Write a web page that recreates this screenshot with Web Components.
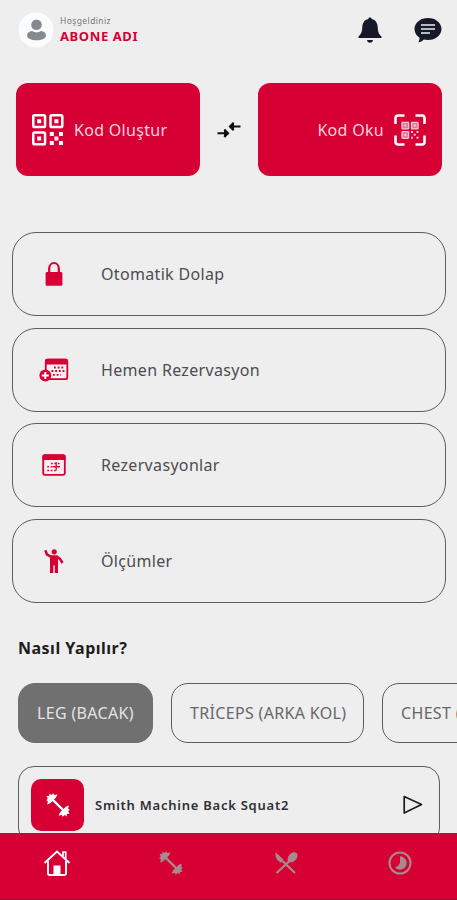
<!DOCTYPE html>
<html lang="tr">
<head>
<meta charset="UTF-8">
<meta name="viewport" content="width=device-width, initial-scale=1.0">
<title>Abone</title>
<style>
  :root {
    --primary-color: #d70035;
    --background: #eeeeee;
    --text-color: #4c4c51;
    --dark-color: #17182a;
    --border-color: #5c5c5e;
  }

  * {
    box-sizing: border-box;
  }

  body {
    margin: 0;
    background: var(--background);
    color: var(--text-color);
    font-family: "Noto Sans", "Open Sans", sans-serif;
  }
</style>
</head>
<body>
<gym-app></gym-app>

<script>
const ICONS = {
  user: `<svg viewBox="0 0 36 36" width="36" height="36">
      <circle cx="18" cy="18" r="17.5" fill="#fbfcfd"/>
      <g fill="#858a90"><circle cx="18.5" cy="12.8" r="5.3"/>
      <path d="M9 23.5c0-2.4 2-4 5-4.4 2.8 1.7 6.2 1.7 9 0 3 .4 5 2 5 4.4 0 2.8-4.2 4.8-9.5 4.8S9 26.3 9 23.5z"/></g>
    </svg>`,
  bell: `<svg viewBox="0 0 24 28" width="24" height="28" fill="currentColor">
      <path d="M12 1.5c1 0 1.6.6 1.8 1.6 3.7.9 5.7 4 5.9 8 .2 4.5.8 6.9 3.8 9.4v1.6H.5v-1.6c3-2.5 3.600-4.9 3.8-9.4.2-4 2.2-7.100 5.900-8C10.400 2.100 11 1.500 12 1.500zM9 24h6c-.2 1.800-1.400 2.800-3 2.800S9.200 25.800 9 24z"/>
    </svg>`,
  chat: `<svg viewBox="0 0 28 28" width="28" height="28">
      <path fill="currentColor" d="M14 2c7.5 0 13.5 4.8 13.5 11S21.5 24 14 24c-1.500 0-2.900-.2-4.200-.5-1.300 1.600-3.200 2.600-5.600 2.700 1-1.200 1.400-2.800 1.300-4.400C2.400 19.700.5 16.600.5 13 .5 6.800 6.500 2 14 2z"/>
      <path d="M7 9h14M7 13h14M7 17h9" stroke="#eee" stroke-width="1.7"/>
    </svg>`,
  qr: `<svg viewBox="0 0 32 32" width="32" height="32" fill="currentColor">
      <g fill="none" stroke="currentColor" stroke-width="2.5">
        <rect x="1.25" y="1.25" width="11.8" height="11.8" rx="1.3"/>
        <rect x="18.5" y="1.25" width="11.8" height="11.8" rx="1.3"/>
        <rect x="1.25" y="18.5" width="11.8" height="11.8" rx="1.3"/>
      </g>
      <path d="M5.2 5.2h4v4h-4zM22.4 5.2h4v4h-4zM5.2 22.4h4v4h-4zM17.8 18h4v4h-4zM27 18h4v4h-4zM22.4 22.5h4v4h-4zM17.8 27h4v4h-4zM27 27h4v4h-4z"/>
    </svg>`,
  scan: `<svg viewBox="0 0 32 32" width="32" height="32">
      <path d="M1.5 10V4a2.500 2.500 0 0 1 2.500-2.500h6.500M21.500 1.500H28A2.500 2.500 0 0 1 30.500 4v6M30.500 21.500V28a2.500 2.500 0 0 1-2.500 2.500h-6.500M10.500 30.500H4A2.500 2.500 0 0 1 1.500 28v-6.500" fill="none" stroke="currentColor" stroke-width="2.6"/>
      <g fill="#e17999" stroke="#f7c6d3" stroke-width="1.3">
        <rect x="8" y="8.3" width="6.6" height="6.6" rx=".7"/>
        <rect x="17.5" y="8.3" width="6.6" height="6.6" rx=".7"/>
        <rect x="8" y="17.7" width="6.6" height="6.6" rx=".7"/>
      </g>
      <path fill="#f7c6d3" d="M10.3 10.6h2v2h-2zM19.8 10.6h2v2h-2zM10.3 20h2v2h-2zM17 17h2v2h-2zM22.5 17h2v2h-2zM19.7 19.7h2v2h-2zM17 22.7h2v2h-2zM22.5 22.7h2v2h-2z"/>
    </svg>`,
  arrows: `<svg viewBox="0 0 24 16" width="24" height="16" fill="none" stroke="#111" stroke-width="2.1">
      <path d="M.5 11.2h10M7.300 7.500l3.700 3.700-3.700 3.700M23.500 4.500h-10M16.700.8L13 4.500l3.700 3.700"/>
      <path d="M7 7.500l4.500 3.700L7 14.900zM17 .8l-4.500 3.700L17 8.200z" fill="#111" stroke="none"/>
    </svg>`,
  lock: `<svg viewBox="0 0 18 26" width="18" height="26">
      <path d="M4.2 12V7.500a4.800 5.500 0 0 1 9.600 0V12" fill="none" stroke="currentColor" stroke-width="2.2"/>
      <rect x=".6" y="11" width="16.8" height="13.8" rx="1.4" fill="currentColor"/>
    </svg>`,
  "calendar-add": `<svg viewBox="0 0 30 24" width="30" height="24">
      <rect x="6.8" y="1.6" width="21.5" height="19.6" rx="2" fill="#f7f0f1" stroke="currentColor" stroke-width="1.8"/>
      <path d="M6 2.5Q6 .8 8 .8h19q2 0 2 1.7v4H6z" fill="currentColor"/>
      <path d="M15 9.5h10.500M12.500 13h13M14 16.800h8" stroke="currentColor" stroke-width="1.8" stroke-dasharray="1.8 1.9"/>
      <circle cx="6.3" cy="17.5" r="5.9" fill="currentColor"/>
      <path d="M6.300 14v7M2.800 17.500h7" stroke="#fff" stroke-width="1.9"/>
    </svg>`,
  calendar: `<svg viewBox="0 0 24 22" width="24" height="22">
      <rect x="1.2" y="1.2" width="21.6" height="19.6" rx="1.8" fill="#f7f0f1" stroke="currentColor" stroke-width="1.8"/>
      <path d="M.5 2Q.5.4 2.5.4h19q2 0 2 1.6v4H.5z" fill="currentColor"/>
      <path d="M9 9.500h9.500M5.300 12.700h13.500M5.300 16.500h9" stroke="currentColor" stroke-width="1.6" stroke-dasharray="1.7 1.7"/>
      <path d="M14.200 8v8.500M10.500 12.700h7.500" stroke="currentColor" stroke-width="1.2"/>
    </svg>`,
  person: `<svg viewBox="0 0 20 26" width="20" height="26">
      <circle cx="10.2" cy="3.8" r="2.6" fill="currentColor"/>
      <path d="M1.300 2.300L3 6.500l4 2.200h6l3 2.200 2.500 4.100" fill="none" stroke="currentColor" stroke-width="2.5"/>
      <path d="M6 7.500h8V25h-3.200v-7.500H9.300V25H6z" fill="currentColor"/>
    </svg>`,
  dumbbell: `<svg viewBox="0 0 24 24" width="24" height="24">
      <path d="M5 5l14 14" stroke="currentColor" stroke-width="2.4"/>
      <path d="M.5 3l2.700.1L3.300.6l2 1.500L7.500.3l.5 1.700 3.500-.5-1.700 3.200L4.200 10.300 1.200 11.500l.7-3.600L.2 7.600 1.800 5.400zM23.500 21l-2.700-.1-.1 2.500-2-1.500-2.200 1.800-.5-1.700-3.500.5 1.700-3.200 5.600-5.600 3-1.200-.7 3.600 1.700.3-1.600 2.200z" fill="currentColor"/>
    </svg>`,
  play: `<svg viewBox="0 0 22 20" width="22" height="20">
      <path d="M2.200 1.500l17.300 8L2.200 18z" fill="none" stroke="#1c1c1e" stroke-width="1.7" stroke-linejoin="round"/>
    </svg>`,
  home: `<svg viewBox="0 0 28 28" width="28" height="28" fill="none" stroke="currentColor">
      <path d="M1.500 14L14 2.500 26.500 14" stroke-width="1.900"/>
      <path d="M20 7V3h2.700v7.500" stroke-width="1.700"/>
      <path d="M5 12v12.300q0 1.700 1.700 1.700h14.600q1.700 0 1.700-1.700V12" stroke-width="1.900"/>
      <path d="M10.500 26v-9.500h7V26z" fill="currentColor" stroke="none"/>
    </svg>`,
  food: `<svg viewBox="0 0 24 24" width="24" height="24">
      <path d="M2.500 22L16 9.500M8.500 10L21 22" stroke="currentColor" stroke-width="2.2"/>
      <path d="M1.700 1.300l7.800 7.500-2.700 3Q.2 7.800 1.700 1.300zM14.500 11c-1.700-2.200-.9-5.600 1.500-7.800 2.300-2 5.300-2.400 6.700-1s1 4.600-1.200 6.900c-2 2.200-5 3.200-7 1.900z" fill="currentColor"/>
    </svg>`,
  progress: `<svg viewBox="0 0 24 24" width="24" height="24">
      <circle cx="12" cy="12" r="10.5" fill="none" stroke="currentColor" stroke-width="2"/>
      <path d="M12 5.300a6.700 6.700 0 1 1-5 11.200q4.500-1.500 5-5.500z" fill="currentColor"/>
    </svg>`,
};

class GymIcon extends HTMLElement {
  constructor() {
    super();
    this.attachShadow({ mode: "open" });
  }

  connectedCallback() {
    this.shadowRoot.innerHTML = `
      <style>
        :host { display: block; flex: none; }
        svg { display: block; }
      </style>
      ${ICONS[this.getAttribute("name")] || ""}
    `;
  }
}

customElements.define("gym-icon", GymIcon);

class AppHeader extends HTMLElement {
  constructor() {
    super();
    this.attachShadow({ mode: "open" });
  }

  connectedCallback() {
    this.shadowRoot.innerHTML = `
      <style>
        :host {
          display: flex;
          align-items: center;
          height: 60px;
          padding: 0 15px 0 18px;
          box-sizing: border-box;
          color: var(--dark-color);
        }

        .user {
          margin-left: 6px;
          flex: 1;
        }

        .hello {
          color: #77777b;
          font-size: 8.5px;
          line-height: 11px;
          letter-spacing: 0.4px;
        }

        .name {
          color: var(--primary-color);
          font-size: 13px;
          font-weight: 700;
          line-height: 20px;
          letter-spacing: 0.6px;
        }

        .actions {
          display: flex;
          align-items: center;
          gap: 32px;
        }
      </style>
      <gym-icon name="user"></gym-icon>
      <div class="user">
        <div class="hello">Hoşgeldiniz</div>
        <div class="name"><slot></slot></div>
      </div>
      <div class="actions">
        <gym-icon name="bell"></gym-icon>
        <gym-icon name="chat"></gym-icon>
      </div>
    `;
  }
}

customElements.define("app-header", AppHeader);

class CodeCard extends HTMLElement {
  constructor() {
    super();
    this.attachShadow({ mode: "open" });
  }

  connectedCallback() {
    this.shadowRoot.innerHTML = `
      <style>
        :host {
          display: flex;
          align-items: center;
          gap: 10px;
          width: 184px;
          height: 93px;
          padding: 0 16px;
          box-sizing: border-box;
          border-radius: 12px;
          background: var(--primary-color);
          color: #fff;
        }

        :host([reverse]) {
          flex-direction: row-reverse;
        }

        span {
          color: #fbd3dd;
          font-size: 16px;
          letter-spacing: 0.3px;
        }
      </style>
      <gym-icon name="${this.getAttribute("icon")}"></gym-icon>
      <span><slot></slot></span>
    `;
  }
}

customElements.define("code-card", CodeCard);

class MenuItem extends HTMLElement {
  constructor() {
    super();
    this.attachShadow({ mode: "open" });
  }

  connectedCallback() {
    this.shadowRoot.innerHTML = `
      <style>
        :host {
          display: grid;
          grid-template-columns: 82px 1fr;
          align-items: center;
          height: 84px;
          padding-left: 6px;
          box-sizing: border-box;
          border: 1px solid var(--border-color);
          border-radius: 24px;
        }

        gym-icon {
          justify-self: center;
          margin-right: 12px;
          color: var(--primary-color);
        }

        span {
          font-size: 16px;
          letter-spacing: 0.33px;
        }
      </style>
      <gym-icon name="${this.getAttribute("icon")}"></gym-icon>
      <span><slot></slot></span>
    `;
  }
}

customElements.define("menu-item", MenuItem);

class CategoryChip extends HTMLElement {
  constructor() {
    super();
    this.attachShadow({ mode: "open" });
  }

  connectedCallback() {
    this.shadowRoot.innerHTML = `
      <style>
        :host {
          display: flex;
          flex: none;
          align-items: center;
          height: 60px;
          padding-left: 18px;
          box-sizing: border-box;
          border: 1px solid var(--border-color);
          border-radius: 17px;
          color: #66666a;
          font-size: 16px;
          letter-spacing: 0.33px;
          white-space: nowrap;
        }

        :host([active]) {
          background: #707070;
          border-color: #707070;
          color: #e4e4e4;
        }
      </style>
      <slot></slot>
    `;
  }
}

customElements.define("category-chip", CategoryChip);

class ExerciseCard extends HTMLElement {
  constructor() {
    super();
    this.attachShadow({ mode: "open" });
  }

  connectedCallback() {
    this.shadowRoot.innerHTML = `
      <style>
        :host {
          display: flex;
          flex: none;
          align-items: center;
          height: 78px;
          padding: 0 15px 0 12px;
          box-sizing: border-box;
          border: 1px solid var(--border-color);
          border-radius: 16px;
        }

        .thumb {
          display: grid;
          place-items: center;
          width: 53px;
          height: 52px;
          border-radius: 10px;
          background: var(--primary-color);
          color: #fff;
        }

        .title {
          flex: 1;
          margin-left: 11px;
          color: #303034;
          font-size: 13px;
          font-weight: 600;
          letter-spacing: 0.75px;
        }
      </style>
      <div class="thumb"><gym-icon name="dumbbell"></gym-icon></div>
      <div class="title"><slot></slot></div>
      <gym-icon name="play"></gym-icon>
    `;
  }
}

customElements.define("exercise-card", ExerciseCard);

class BottomNav extends HTMLElement {
  constructor() {
    super();
    this.attachShadow({ mode: "open" });
  }

  connectedCallback() {
    this.shadowRoot.innerHTML = `
      <style>
        :host {
          display: grid;
          grid-template-columns: repeat(4, 1fr);
          place-items: center;
          height: 67px;
          padding-bottom: 7px;
          box-sizing: border-box;
          border-bottom: 1px solid #8c1230;
          background: var(--primary-color);
          color: #a58c8c;
        }

        .active {
          color: #fff;
        }
      </style>
      <gym-icon class="active" name="home"></gym-icon>
      <gym-icon name="dumbbell"></gym-icon>
      <gym-icon name="food"></gym-icon>
      <gym-icon name="progress"></gym-icon>
    `;
  }
}

customElements.define("bottom-nav", BottomNav);

class GymApp extends HTMLElement {
  constructor() {
    super();
    this.attachShadow({ mode: "open" });
  }

  connectedCallback() {
    this.shadowRoot.innerHTML = `
      <style>
        :host {
          display: flex;
          flex-direction: column;
          height: 900px;
          overflow: hidden;
        }

        main {
          flex: 1;
          min-height: 0;
          overflow: hidden;
        }

        .codes {
          display: flex;
          align-items: center;
          justify-content: space-between;
          padding: 23px 15px 0 16px;
        }

        .menu {
          display: grid;
          gap: 11.5px;
          padding: 56px 11px 0 12px;
        }

        h2 {
          margin: 33.5px 0 0 18px;
          color: #1d1d20;
          font-size: 16px;
          font-weight: 700;
          line-height: 24px;
          letter-spacing: 0.5px;
        }

        .chips {
          display: flex;
          gap: 18px;
          margin: 23px 0;
          padding-left: 18px;
          overflow: hidden;
        }

        exercise-card {
          margin: 0 17px 0 18px;
        }
      </style>
      <main>
        <app-header>ABONE ADI</app-header>
        <div class="codes">
          <code-card icon="qr">Kod Oluştur</code-card>
          <gym-icon name="arrows"></gym-icon>
          <code-card icon="scan" reverse>Kod Oku</code-card>
        </div>
        <div class="menu">
          <menu-item icon="lock">Otomatik Dolap</menu-item>
          <menu-item icon="calendar-add">Hemen Rezervasyon</menu-item>
          <menu-item icon="calendar">Rezervasyonlar</menu-item>
          <menu-item icon="person">Ölçümler</menu-item>
        </div>
        <h2>Nasıl Yapılır?</h2>
        <div class="chips">
          <category-chip style="width: 135px" active>LEG (BACAK)</category-chip>
          <category-chip style="width: 193px">TRİCEPS (ARKA KOL)</category-chip>
          <category-chip style="width: 150px">CHEST (</category-chip>
        </div>
        <exercise-card>Smith Machine Back Squat2</exercise-card>
      </main>
      <bottom-nav></bottom-nav>
    `;
  }
}

customElements.define("gym-app", GymApp);
</script>
</body>
</html>
